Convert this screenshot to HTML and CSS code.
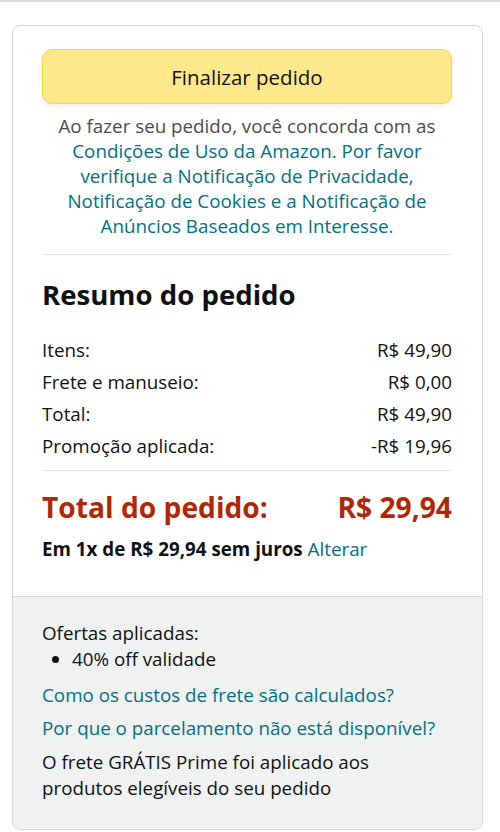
FILE: index.html
```html
<!DOCTYPE html>
<html lang="pt-BR">
<head>
    <meta charset="UTF-8">
    <meta name="viewport" content="width=device-width, initial-scale=1.0">
    <link rel="stylesheet" href="styles.css">
    <title>Resumo do pedido</title>
</head>
<body>
    <div class="topline"></div>
    <div class="box">
        <div class="box-inner">
            <button class="place-order" type="button">Finalizar pedido</button>
            <p class="legal">
                Ao fazer seu pedido, você concorda com as<br>
                <a href="#">Condições de Uso da Amazon. Por favor<br>
                verifique a Notificação de Privacidade,<br>
                Notificação de Cookies e a Notificação de<br>
                Anúncios Baseados em Interesse.</a>
            </p>

            <hr class="divider">

            <h2>Resumo do pedido</h2>
            <div class="rows">
                <div class="row"><span>Itens:</span><span>R$ 49,90</span></div>
                <div class="row"><span>Frete e manuseio:</span><span>R$ 0,00</span></div>
                <div class="row"><span>Total:</span><span>R$ 49,90</span></div>
                <div class="row"><span>Promoção aplicada:</span><span>-R$ 19,96</span></div>
            </div>

            <hr class="divider">

            <div class="grand-total"><span>Total do pedido:</span><span>R$ 29,94</span></div>
            <p class="installments"><b>Em 1x de R$ 29,94 sem juros</b> <a href="#">Alterar</a></p>
        </div>

        <div class="box-footer">
            <p class="offers-title">Ofertas aplicadas:</p>
            <ul class="offers">
                <li>40% off validade</li>
            </ul>
            <p class="footer-link"><a href="#">Como os custos de frete são calculados?</a></p>
            <p class="footer-link"><a href="#">Por que o parcelamento não está disponível?</a></p>
            <p class="prime-note">O frete GRÁTIS Prime foi aplicado aos<br>produtos elegíveis do seu pedido</p>
        </div>
    </div>
</body>
</html>
```

FILE: styles.css
```css
body {
    font-family: "Open Sans", "Noto Sans", Arial, sans-serif;
    font-size: 18.8px;
    color: #0f1111;
    background-color: #fff;
    margin: 0;
    padding: 0;
}

a {
    color: #007185;
    text-decoration: none;
}

p {
    margin: 0;
}

.topline {
    height: 2px;
    background-color: #dddddd;
}

.box {
    margin: 23px 17px 0 12px;
    border: 1px solid #d5d9d9;
    border-radius: 8px;
    overflow: hidden;
}

.box-inner {
    padding: 23px 30px 35px 29px;
}

.place-order {
    display: block;
    width: 100%;
    height: 55px;
    background-color: #ffe88a;
    border: 1px solid #fcd535;
    border-radius: 10px;
    box-shadow: 0 2px 5px rgba(213, 217, 217, 0.5);
    font-family: inherit;
    font-size: 20.5px;
    color: #0f1111;
    cursor: pointer;
}

.legal {
    margin-top: 10px;
    text-align: center;
    line-height: 25px;
    color: #494d4d;
    font-size: 18.8px;
}

.divider {
    border: none;
    border-top: 1px solid #e7e7e7;
    margin: 15px 0 0;
}

h2 {
    font-size: 27.6px;
    font-weight: 700;
    margin: 24px 0 25px;
    line-height: 30px;
}

.rows {
    display: flex;
    flex-direction: column;
}

.row {
    display: flex;
    justify-content: space-between;
    line-height: 32px;
}

.rows + .divider {
    margin-top: 8px;
}

.grand-total {
    display: flex;
    justify-content: space-between;
    margin-top: 18px;
    font-size: 28.2px;
    font-weight: 700;
    color: #b12704;
    line-height: 36px;
}

.installments {
    margin-top: 12px;
    line-height: 24px;
}

.box-footer {
    background-color: #f0f2f2;
    border-top: 1px solid #d5d9d9;
    padding: 23px 30px 28px 29px;
}

.offers-title {
    line-height: 26px;
}

.offers {
    margin: 0 0 7px;
    padding-left: 30px;
}

.offers li {
    line-height: 26px;
}

.footer-link {
    line-height: 33px;
}

.prime-note {
    margin-top: 4px;
    line-height: 26px;
}
```
